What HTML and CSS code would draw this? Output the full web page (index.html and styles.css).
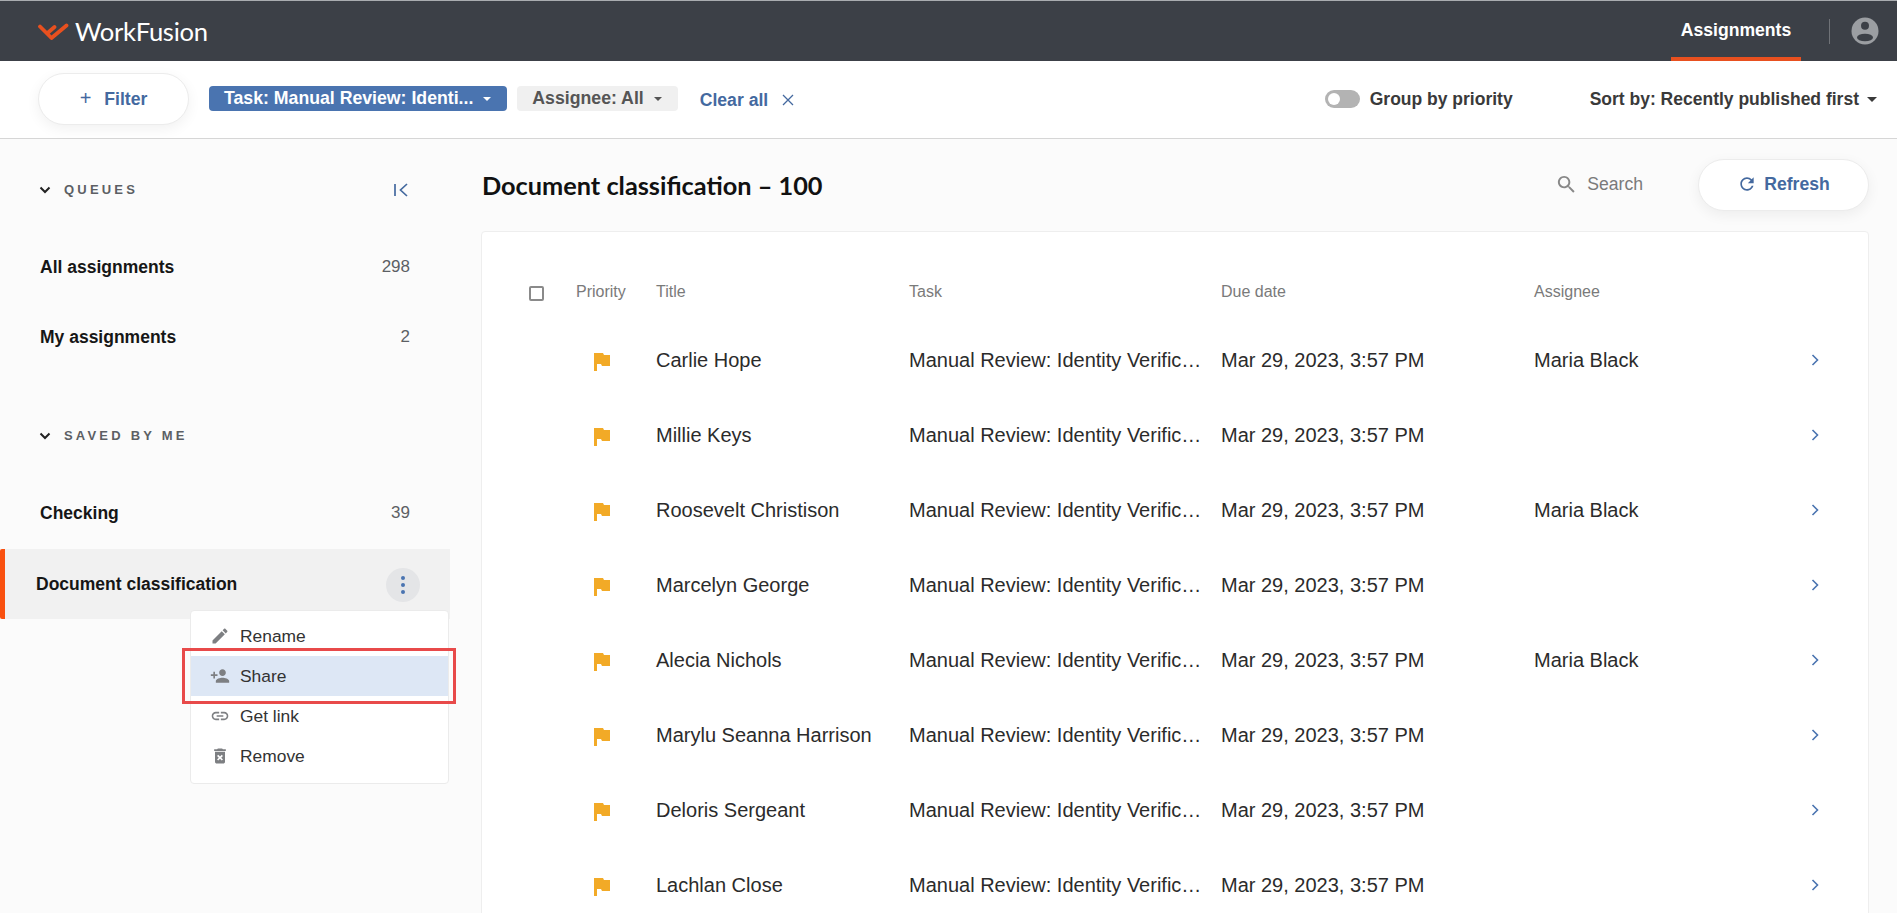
FILE: index.html
```html
<!DOCTYPE html>
<html lang="en">
<head>
    <meta charset="UTF-8">
    <meta name="viewport" content="width=device-width, initial-scale=1.0">
    <title>Assignments</title>
    <link rel="stylesheet" href="styles.css">
</head>
<body>
    <header class="header">
        <a href="#" class="logo">
            <svg class="logo-mark" viewBox="0 0 32 19"><path d="M3 4.500 L10 11.500 L17.500 5 M10 11.500 L14.500 16 L29.500 3.500" stroke="#e8501f" stroke-width="3.800" fill="none" stroke-linecap="round" stroke-linejoin="round"/></svg>
            <span>WorkFusion</span>
        </a>
        <nav class="header-nav">
            <a href="#" class="nav-link">Assignments</a>
            <span class="nav-divider"></span>
            <svg class="avatar" viewBox="0 0 28 28"><circle cx="14" cy="14" r="13.500" fill="#9b9ea2"/><circle cx="14" cy="8.700" r="4" fill="#3c4047"/><ellipse cx="14" cy="20.500" rx="8" ry="3.800" fill="#3c4047"/></svg>
        </nav>
    </header>

    <div class="toolbar">
        <button class="pill-btn filter-btn"><span class="plus">+</span> Filter</button>
        <span class="chip chip-active"><span class="chip-text">Task: Manual Review: Identi...</span><i class="caret"></i></span>
        <span class="chip"><span class="chip-text">Assignee: All</span><i class="caret"></i></span>
        <a href="#" class="clear-all">Clear all
            <svg class="clear-icon" viewBox="0 0 12 12"><path d="M1 1 L11 11 M11 1 L1 11" stroke="#44699f" stroke-width="1.300" fill="none"/></svg>
        </a>
        <div class="toolbar-right">
            <span class="toggle"><i class="toggle-knob"></i></span>
            <span class="toggle-label">Group by priority</span>
            <span class="sort">Sort by: Recently published first<i class="caret caret-dark"></i></span>
        </div>
    </div>

    <div class="main">
        <aside class="sidebar">
            <div class="section-head section-queues">
                <svg class="chev-down" viewBox="0 0 12 8"><path d="M1.500 1.500 L6 6 L10.500 1.500" stroke="#222" stroke-width="2" fill="none"/></svg>
                <span class="section-title">QUEUES</span>
                <svg class="collapse-icon" viewBox="0 0 16 14"><path d="M2 1 V13 M14 1 L7.500 7 L14 13" stroke="#44699f" stroke-width="1.700" fill="none"/></svg>
            </div>
            <div class="queue"><span>All assignments</span><span class="count">298</span></div>
            <div class="queue"><span>My assignments</span><span class="count">2</span></div>

            <div class="section-head section-saved">
                <svg class="chev-down" viewBox="0 0 12 8"><path d="M1.500 1.500 L6 6 L10.500 1.500" stroke="#222" stroke-width="2" fill="none"/></svg>
                <span class="section-title">SAVED BY ME</span>
            </div>
            <div class="queue"><span>Checking</span><span class="count">39</span></div>
            <div class="queue queue-active">
                <span>Document classification</span>
                <span class="more-btn"><i></i><i></i><i></i></span>
            </div>

            <div class="menu">
                <div class="menu-item">
                    <svg viewBox="0 0 24 24"><path d="M3 17.250V21h3.750L17.810 9.940l-3.750-3.750L3 17.250zM20.710 7.040c.39-.39.39-1.020 0-1.410l-2.340-2.340c-.39-.39-1.020-.39-1.410 0l-1.830 1.830 3.750 3.750 1.830-1.830z"/></svg>
                    Rename
                </div>
                <div class="menu-item menu-item-active">
                    <svg viewBox="0 0 24 24"><path d="M15 12c2.210 0 4-1.790 4-4s-1.790-4-4-4-4 1.790-4 4 1.790 4 4 4zm-9-2V7H4v3H1v2h3v3h2v-3h3v-2H6zm9 4c-2.670 0-8 1.340-8 4v2h16v-2c0-2.660-5.330-4-8-4z"/></svg>
                    Share
                </div>
                <div class="menu-item">
                    <svg viewBox="0 0 24 24"><path d="M3.900 12c0-1.710 1.390-3.100 3.100-3.100h4V7H7c-2.760 0-5 2.240-5 5s2.240 5 5 5h4v-1.900H7c-1.710 0-3.100-1.390-3.100-3.100zM8 13h8v-2H8v2zm9-6h-4v1.900h4c1.710 0 3.100 1.390 3.100 3.100s-1.390 3.100-3.100 3.100h-4V17h4c2.760 0 5-2.240 5-5s-2.240-5-5-5z"/></svg>
                    Get link
                </div>
                <div class="menu-item">
                    <svg viewBox="0 0 24 24"><path d="M6 19c0 1.100.9 2 2 2h8c1.100 0 2-.9 2-2V7H6v12zm2.460-7.120l1.410-1.410L12 12.590l2.120-2.120 1.410 1.410L13.410 14l2.120 2.120-1.410 1.410L12 15.410l-2.120 2.120-1.410-1.410L10.590 14l-2.130-2.120zM15.500 4l-1-1h-5l-1 1H5v2h14V4z"/></svg>
                    Remove
                </div>
            </div>
            <div class="highlight-box"></div>
        </aside>

        <section class="content">
            <div class="content-head">
                <h1>Document classification – 100</h1>
                <div class="search">
                    <svg viewBox="0 0 24 24"><path d="M15.500 14h-.79l-.28-.27C15.410 12.590 16 11.110 16 9.500 16 5.910 13.090 3 9.500 3S3 5.910 3 9.500 5.910 16 9.500 16c1.610 0 3.090-.59 4.230-1.570l.27.280v.79l5 4.990L20.490 19l-4.990-5zm-6 0C7.010 14 5 11.990 5 9.500S7.010 5 9.500 5 14 7.010 14 9.500 11.990 14 9.500 14z"/></svg>
                    Search
                </div>
                <button class="pill-btn refresh-btn">
                    <svg viewBox="0 0 24 24"><path d="M17.650 6.350C16.200 4.900 14.210 4 12 4c-4.420 0-7.990 3.580-7.990 8s3.570 8 7.990 8c3.730 0 6.840-2.550 7.730-6h-2.080c-.82 2.330-3.040 4-5.650 4-3.310 0-6-2.690-6-6s2.690-6 6-6c1.660 0 3.140.69 4.220 1.780L13 11h7V4l-2.350 2.350z"/></svg>
                    Refresh
                </button>
            </div>

            <div class="card">
                <div class="row row-head">
                    <span class="checkbox"></span>
                    <span>Priority</span>
                    <span>Title</span>
                    <span>Task</span>
                    <span>Due date</span>
                    <span>Assignee</span>
                    <span></span>
                </div>
                <div class="row">
                    <span></span>
                    <svg class="flag" viewBox="0 0 16 18"><path d="M0 0h9l1 2h6v11H8l-1-2H3v7H0z"/></svg>
                    <span>Carlie Hope</span>
                    <span class="task">Manual Review: Identity Verific…</span>
                    <span>Mar 29, 2023, 3:57 PM</span>
                    <span>Maria Black</span>
                    <svg class="chev" viewBox="0 0 8 12"><path d="M1.500 1 L6.500 6 L1.500 11" stroke="#4a74b0" stroke-width="1.600" fill="none"/></svg>
                </div>
                <div class="row">
                    <span></span>
                    <svg class="flag" viewBox="0 0 16 18"><path d="M0 0h9l1 2h6v11H8l-1-2H3v7H0z"/></svg>
                    <span>Millie Keys</span>
                    <span class="task">Manual Review: Identity Verific…</span>
                    <span>Mar 29, 2023, 3:57 PM</span>
                    <span></span>
                    <svg class="chev" viewBox="0 0 8 12"><path d="M1.500 1 L6.500 6 L1.500 11" stroke="#4a74b0" stroke-width="1.600" fill="none"/></svg>
                </div>
                <div class="row">
                    <span></span>
                    <svg class="flag" viewBox="0 0 16 18"><path d="M0 0h9l1 2h6v11H8l-1-2H3v7H0z"/></svg>
                    <span>Roosevelt Christison</span>
                    <span class="task">Manual Review: Identity Verific…</span>
                    <span>Mar 29, 2023, 3:57 PM</span>
                    <span>Maria Black</span>
                    <svg class="chev" viewBox="0 0 8 12"><path d="M1.500 1 L6.500 6 L1.500 11" stroke="#4a74b0" stroke-width="1.600" fill="none"/></svg>
                </div>
                <div class="row">
                    <span></span>
                    <svg class="flag" viewBox="0 0 16 18"><path d="M0 0h9l1 2h6v11H8l-1-2H3v7H0z"/></svg>
                    <span>Marcelyn George</span>
                    <span class="task">Manual Review: Identity Verific…</span>
                    <span>Mar 29, 2023, 3:57 PM</span>
                    <span></span>
                    <svg class="chev" viewBox="0 0 8 12"><path d="M1.500 1 L6.500 6 L1.500 11" stroke="#4a74b0" stroke-width="1.600" fill="none"/></svg>
                </div>
                <div class="row">
                    <span></span>
                    <svg class="flag" viewBox="0 0 16 18"><path d="M0 0h9l1 2h6v11H8l-1-2H3v7H0z"/></svg>
                    <span>Alecia Nichols</span>
                    <span class="task">Manual Review: Identity Verific…</span>
                    <span>Mar 29, 2023, 3:57 PM</span>
                    <span>Maria Black</span>
                    <svg class="chev" viewBox="0 0 8 12"><path d="M1.500 1 L6.500 6 L1.500 11" stroke="#4a74b0" stroke-width="1.600" fill="none"/></svg>
                </div>
                <div class="row">
                    <span></span>
                    <svg class="flag" viewBox="0 0 16 18"><path d="M0 0h9l1 2h6v11H8l-1-2H3v7H0z"/></svg>
                    <span>Marylu Seanna Harrison</span>
                    <span class="task">Manual Review: Identity Verific…</span>
                    <span>Mar 29, 2023, 3:57 PM</span>
                    <span></span>
                    <svg class="chev" viewBox="0 0 8 12"><path d="M1.500 1 L6.500 6 L1.500 11" stroke="#4a74b0" stroke-width="1.600" fill="none"/></svg>
                </div>
                <div class="row">
                    <span></span>
                    <svg class="flag" viewBox="0 0 16 18"><path d="M0 0h9l1 2h6v11H8l-1-2H3v7H0z"/></svg>
                    <span>Deloris Sergeant</span>
                    <span class="task">Manual Review: Identity Verific…</span>
                    <span>Mar 29, 2023, 3:57 PM</span>
                    <span></span>
                    <svg class="chev" viewBox="0 0 8 12"><path d="M1.500 1 L6.500 6 L1.500 11" stroke="#4a74b0" stroke-width="1.600" fill="none"/></svg>
                </div>
                <div class="row">
                    <span></span>
                    <svg class="flag" viewBox="0 0 16 18"><path d="M0 0h9l1 2h6v11H8l-1-2H3v7H0z"/></svg>
                    <span>Lachlan Close</span>
                    <span class="task">Manual Review: Identity Verific…</span>
                    <span>Mar 29, 2023, 3:57 PM</span>
                    <span></span>
                    <svg class="chev" viewBox="0 0 8 12"><path d="M1.500 1 L6.500 6 L1.500 11" stroke="#4a74b0" stroke-width="1.600" fill="none"/></svg>
                </div>
            </div>
        </section>
    </div>
</body>
</html>
```

FILE: styles.css
```css
* {
    box-sizing: border-box;
}
body {
    font-family: "Liberation Sans", Arial, sans-serif;
    margin: 0;
    height: 100vh;
    overflow: hidden;
    background-color: #fbfbfb;
    color: #222;
}
a {
    text-decoration: none;
}

.header {
    height: 61px;
    background-color: #3c4047;
    border-top: 1px solid #a9acb0;
    display: flex;
    align-items: center;
    justify-content: space-between;
    padding: 0 18px 0 37px;
}
.logo {
    display: flex;
    align-items: center;
    gap: 6px;
    color: #fff;
    font-family: Lato, sans-serif;
    font-size: 25.6px;
    letter-spacing: -0.3px;
}
.logo-mark {
    width: 32px;
    height: 19px;
}
.header-nav {
    display: flex;
    align-items: center;
    height: 100%;
}
.nav-link {
    width: 130px;
    height: 100%;
    display: flex;
    align-items: center;
    justify-content: center;
    padding-top: 2px;
    color: #fff;
    font-size: 17.6px;
    font-weight: bold;
    border-bottom: 4px solid #e8501f;
}
.nav-divider {
    width: 1px;
    height: 25px;
    margin: 0 21px 0 28px;
    background-color: #6f7277;
}
.avatar {
    width: 28px;
    height: 28px;
}

.toolbar {
    height: 78px;
    background-color: #fff;
    border-bottom: 1px solid #d6d6d6;
    display: flex;
    align-items: center;
    padding: 0 20px 2px 38px;
}
.pill-btn {
    background-color: #fff;
    border: 1px solid #ececec;
    border-radius: 26px;
    color: #44699f;
    font-family: inherit;
    font-size: 17.6px;
    font-weight: bold;
    box-shadow: 0 4px 14px rgba(0, 0, 0, 0.06);
}
.filter-btn {
    width: 151px;
    height: 52px;
    margin-right: 20px;
}
.plus {
    font-weight: normal;
    font-size: 20px;
    margin-right: 8px;
}
.chip {
    height: 25px;
    display: flex;
    align-items: center;
    padding: 0 16px 0 15px;
    margin-right: 10px;
    border-radius: 4px;
    background-color: #f0f0f0;
    color: #555;
    font-size: 17.7px;
    font-weight: bold;
}
.chip-active {
    background-color: #4a74b0;
    color: #fff;
}
.caret {
    display: inline-block;
    margin-left: 10px;
    border-left: 4px solid transparent;
    border-right: 4px solid transparent;
    border-top: 4px solid currentColor;
}
.caret-dark {
    margin-left: 8px;
    border-left-width: 5px;
    border-right-width: 5px;
    border-top-width: 5px;
}
.clear-all {
    display: flex;
    align-items: center;
    gap: 14px;
    margin-left: 12px;
    padding-top: 3px;
    color: #44699f;
    font-size: 17.6px;
    font-weight: bold;
}
.clear-icon {
    width: 12px;
    height: 12px;
}
.toolbar-right {
    margin-left: auto;
    padding-top: 1px;
    display: flex;
    align-items: center;
}
.toggle {
    width: 35px;
    height: 18px;
    padding: 3px;
    border-radius: 9px;
    background-color: #b3b3b3;
    margin-right: 10px;
}
.toggle-knob {
    display: block;
    width: 12px;
    height: 12px;
    border-radius: 50%;
    background-color: #fff;
}
.toggle-label,
.sort {
    color: #3a3a3a;
    font-size: 17.5px;
    font-weight: bold;
}
.sort {
    display: flex;
    align-items: center;
    margin-left: 77px;
}

.main {
    display: flex;
    height: calc(100vh - 139px);
}
.sidebar {
    position: relative;
    width: 450px;
    flex-shrink: 0;
}
.section-head {
    display: flex;
    align-items: center;
    padding: 0 40px 0 39px;
}
.section-queues {
    height: 93px;
    padding-top: 8px;
}
.section-saved {
    height: 106px;
    padding-top: 21px;
}
.chev-down {
    width: 12px;
    height: 8px;
    margin-right: 13px;
}
.section-title {
    color: #5c5f64;
    font-size: 13px;
    font-weight: bold;
    letter-spacing: 3.2px;
}
.collapse-icon {
    width: 16px;
    height: 14px;
    margin-left: auto;
    margin-right: 1px;
}
.queue {
    height: 70px;
    display: flex;
    align-items: center;
    justify-content: space-between;
    padding: 0 40px;
    color: #161616;
    font-size: 17.5px;
    font-weight: bold;
}
.count {
    color: #5c5f64;
    font-size: 17px;
    font-weight: normal;
}
.queue-active {
    margin-top: 1px;
    padding: 1px 30px 0 31px;
    background-color: #f1f1f1;
    border-left: 5px solid #f9500f;
    border-radius: 2px 0 0 2px;
}
.more-btn {
    width: 34px;
    height: 34px;
    border-radius: 50%;
    background-color: #e4e5e7;
    display: flex;
    flex-direction: column;
    align-items: center;
    justify-content: center;
    gap: 3px;
}
.more-btn i {
    width: 4px;
    height: 4px;
    border-radius: 50%;
    background-color: #4a74b0;
}
.menu {
    position: absolute;
    top: 471px;
    left: 190px;
    width: 259px;
    padding: 5px 0 7px;
    background-color: #fff;
    border: 1px solid #ebebeb;
    border-radius: 4px;
}
.menu-item {
    height: 40px;
    display: flex;
    align-items: center;
    gap: 10px;
    padding-left: 19px;
    color: #333;
    font-size: 17.4px;
}
.menu-item svg {
    width: 20px;
    height: 20px;
    fill: #7d7f82;
}
.menu-item-active {
    background-color: #dde7f5;
}
.highlight-box {
    position: absolute;
    top: 509px;
    left: 182px;
    width: 274px;
    height: 56px;
    border: 3px solid #e84a4a;
}

.content {
    flex: 1;
    min-width: 0;
    padding: 0 28px 0 31px;
}
.content-head {
    height: 92px;
    display: flex;
    align-items: center;
}
.content-head h1 {
    margin: 0 0 0 1px;
    font-family: Lato, sans-serif;
    font-size: 25.3px;
    font-weight: bold;
    color: #111;
}
.search {
    margin-left: auto;
    display: flex;
    align-items: center;
    gap: 9px;
    margin-right: 55px;
    padding-bottom: 2px;
    color: #7a7a7a;
    font-size: 17.6px;
}
.search svg {
    width: 23px;
    height: 23px;
    fill: #888;
}
.refresh-btn {
    width: 171px;
    height: 52px;
    display: flex;
    align-items: center;
    justify-content: center;
    gap: 7px;
    padding-bottom: 3px;
}
.refresh-btn svg {
    width: 20px;
    height: 20px;
    fill: #44699f;
}
.card {
    background-color: #fff;
    border: 1px solid #eeeeee;
    border-radius: 4px;
    padding: 29px 0 0;
}
.row {
    display: grid;
    grid-template-columns: 47px 80px 253px 312px 313px 277px 1fr;
    align-items: center;
    height: 75px;
    padding-left: 47px;
    font-size: 20px;
    color: #2b2b2b;
}
.row-head {
    height: 62px;
    color: #7a7a7a;
    font-size: 16px;
}
.checkbox {
    width: 15px;
    height: 15px;
    margin-top: 3px;
    border: 2px solid #8a8a8a;
    border-radius: 2px;
}
.flag {
    width: 16px;
    height: 18px;
    fill: #f2aa27;
    margin-left: 18px;
    margin-top: 2px;
}
.task {
    white-space: nowrap;
}
.chev {
    width: 8px;
    height: 12px;
    margin-bottom: 2px;
}
```
